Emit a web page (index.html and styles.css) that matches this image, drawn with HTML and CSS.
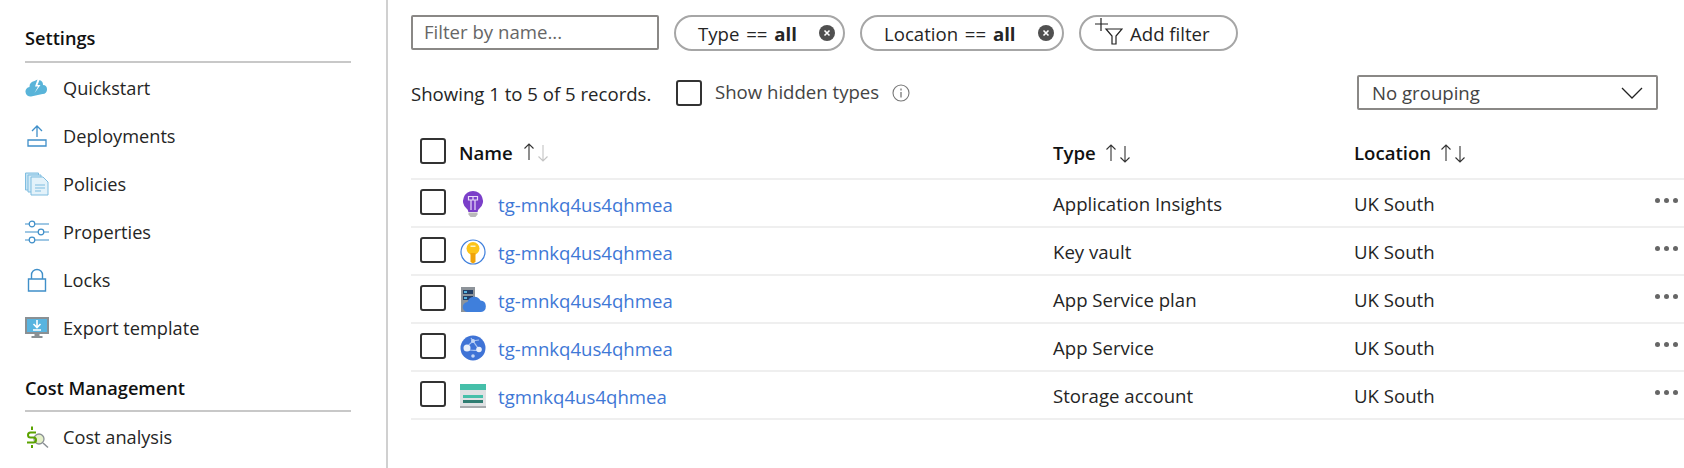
FILE: index.html
```html
<!DOCTYPE html>
<html lang="en">
<head>
    <meta charset="UTF-8">
    <title>Resources</title>
    <link rel="stylesheet" href="styles.css">
</head>
<body>
    <div class="page">

        <div class="sidebar">
            <div class="section-title first">Settings</div>
            <a class="nav-item">
                <svg class="nav-icon" viewBox="0 0 24 24"><path fill="#59b4d9" d="M6 20.500a5 5 0 0 1-5.500-4.500 4.500 4.500 0 0 1 4-5 6 6 0 0 1 5-6l3-1.500-2.500 7h3l-3.500 6.500 6-8h-3l2-5a5 5 0 0 1 3.500 5 4.300 4.300 0 0 1 4 4.500 4.200 4.200 0 0 1-4.500 4.500z"/></svg>
                Quickstart
            </a>
            <a class="nav-item">
                <svg class="nav-icon" viewBox="0 0 24 24"><path fill="none" stroke="#3f8fc9" stroke-width="1.300" d="M3 16h18v6H3zM12 13V2M7 7l5-5 5 5"/></svg>
                Deployments
            </a>
            <a class="nav-item">
                <svg class="nav-icon" viewBox="0 0 24 24"><path fill="#c5e3f3" stroke="#7fbde0" d="M.5 1h13v17H.5z"/><path fill="#d5ebf7" stroke="#7fbde0" d="M3 3h13v17H3z"/><path fill="#e3f2fa" stroke="#7fbde0" d="M6 5h12l5 5v13H6z"/><path stroke="#7fbde0" d="M10 13h10M10 16h10M10 19h6"/></svg>
                Policies
            </a>
            <a class="nav-item">
                <svg class="nav-icon" viewBox="0 0 24 24"><g fill="#fff" stroke="#3f8fc9" stroke-width="1.200"><path d="M0 4h24M0 12h24M0 20h24"/><circle cx="7" cy="4" r="2.800"/><circle cx="16" cy="12" r="2.800"/><circle cx="7" cy="20" r="2.800"/></g></svg>
                Properties
            </a>
            <a class="nav-item">
                <svg class="nav-icon" viewBox="0 0 24 24"><path fill="none" stroke="#3f8fc9" stroke-width="1.400" d="M3.500 11h17v12h-17zM6.500 11V7a5.500 5.500 0 0 1 11 0v4"/></svg>
                Locks
            </a>
            <a class="nav-item">
                <svg class="nav-icon" viewBox="0 0 24 24"><path fill="#8a9094" d="M0 1h24v17H0zM9.500 18h5v2h3v2h-11v-2h3z"/><path fill="#59b4e0" d="M2 3h20v13H2z"/><path fill="none" stroke="#fff" stroke-width="1.600" d="M12 4v7M8.500 8l3.500 3.500L15.500 8M8 14h8"/></svg>
                Export template
            </a>

            <div class="section-title">Cost Management</div>
            <a class="nav-item">
                <svg class="nav-icon" viewBox="0 0 24 24"><circle cx="14" cy="14" r="5" fill="#e4f0c8" stroke="#8a9094" stroke-width="1.300"/><path stroke="#8a9094" stroke-width="1.500" d="M18 18l5 4.500"/><path fill="none" stroke="#5ba300" stroke-width="2" d="M11 7.500H5.500a2.500 2.500 0 0 0 0 5h3a2.500 2.500 0 0 1 0 5H2M7 1.500V5M7 20v3"/></svg>
                Cost analysis
            </a>
        </div>

        <div class="main">

            <div class="toolbar">
                <div class="filter-input">Filter by name...</div>
                <div class="pill pill-type">
                    <span class="pill-text">Type == <b>all</b></span>
                    <span class="pill-x">
                        <svg viewBox="0 0 16 16"><circle cx="8" cy="8" r="8" fill="#505050"/><path stroke="#fff" stroke-width="1.600" d="M5.500 5.500l5 5M10.500 5.500l-5 5"/></svg>
                    </span>
                </div>
                <div class="pill pill-location">
                    <span class="pill-text">Location == <b>all</b></span>
                    <span class="pill-x">
                        <svg viewBox="0 0 16 16"><circle cx="8" cy="8" r="8" fill="#505050"/><path stroke="#fff" stroke-width="1.600" d="M5.500 5.500l5 5M10.500 5.500l-5 5"/></svg>
                    </span>
                </div>
                <div class="pill pill-add">
                    <svg class="add-icon" viewBox="0 0 28 28"><path fill="none" stroke="#222" stroke-width="1.200" d="M6 1v13M0 7h13M11 12h16l-6 7v8h-4v-8z"/></svg>
                    <span>Add filter</span>
                </div>
            </div>

            <div class="summary">
                <span class="records">Showing 1 to 5 of 5 records.</span>
                <span class="check hidden-check"></span>
                <span class="hidden-label">Show hidden types</span>
                <svg class="info" viewBox="0 0 18 18"><circle cx="9" cy="9" r="8" fill="none" stroke="#777" stroke-width="1.100"/><path stroke="#777" stroke-width="1.300" d="M9 8v5.500M9 4.500v2"/></svg>
                <div class="grouping">
                    <span>No grouping</span>
                    <svg class="chevron" viewBox="0 0 22 12"><path fill="none" stroke="#222" stroke-width="1.300" d="M1 1l10 10L21 1"/></svg>
                </div>
            </div>

            <div class="row head">
                <div class="name-col">
                    <span class="check"></span>
                    <span class="head-label">Name</span>
                    <svg class="sort" viewBox="0 0 28 20"><path fill="none" stroke="#333" stroke-width="1.100" d="M6 18V2M1.500 6.500L6 2l4.500 4.500"/><path fill="none" stroke="#c4c4c4" stroke-width="1.100" d="M20 3v16M15.500 14.500L20 19l4.500-4.500"/></svg>
                </div>
                <div><span class="head-label">Type</span>
                    <svg class="sort" viewBox="0 0 28 20"><path fill="none" stroke="#333" stroke-width="1.100" d="M6 18V2M1.500 6.500L6 2l4.500 4.500M20 3v16M15.500 14.500L20 19l4.500-4.500"/></svg>
                </div>
                <div><span class="head-label">Location</span>
                    <svg class="sort" viewBox="0 0 28 20"><path fill="none" stroke="#333" stroke-width="1.100" d="M6 18V2M1.500 6.500L6 2l4.500 4.500M20 3v16M15.500 14.500L20 19l4.500-4.500"/></svg>
                </div>
            </div>

            <div class="row">
                <div class="name-col">
                    <span class="check"></span>
                    <svg class="res-icon" viewBox="0 0 26 26"><path fill="#7b3fc9" d="M13 0a10 10 0 0 0-6.500 17.500c1.300 1.200 1.800 2 1.800 3.500h9.400c0-1.500.5-2.300 1.800-3.500A10 10 0 0 0 13 0z"/><path fill="#b9b9b9" d="M8.500 21.500h9v2l-2 2.500h-5l-2-2.500z"/><path fill="none" stroke="#e8dcf8" stroke-width="1.200" d="M11 9v10M15 9v10M8.500 5.500H13v3.500H8.500zM13 5.500h4.500v3.500H13z"/></svg>
                    <a class="res-link">tg-mnkq4us4qhmea</a>
                </div>
                <div>Application Insights</div>
                <div>UK South</div>
                <span class="dots"><i></i><i></i><i></i></span>
            </div>
            <div class="row">
                <div class="name-col">
                    <span class="check"></span>
                    <svg class="res-icon" viewBox="0 0 26 26"><circle cx="13" cy="13" r="12" fill="#fff" stroke="#3f7fdc" stroke-width="1.200"/><circle cx="13" cy="9.500" r="6.500" fill="#fcc419"/><path fill="#f0a30a" d="M10.500 14h5v9l-2.500 1.500-2.500-1.500z"/><path fill="#fff3c4" d="M10.500 6.500h5V8h-5z"/></svg>
                    <a class="res-link">tg-mnkq4us4qhmea</a>
                </div>
                <div>Key vault</div>
                <div>UK South</div>
                <span class="dots"><i></i><i></i><i></i></span>
            </div>
            <div class="row">
                <div class="name-col">
                    <span class="check"></span>
                    <svg class="res-icon" viewBox="0 0 26 26"><path fill="#8e949a" d="M1 0h14v25H1z"/><path fill="#233f66" d="M3 3h10v4H3zM3 9h10v4H3z"/><path fill="#59b4e0" d="M4 4h3v2H4zM4 10h3v2H4z"/><path fill="#3f7fdc" d="M8 25a5 5 0 0 1-.5-10 7 7 0 0 1 13-1.500 5.800 5.800 0 0 1 .5 11.500z"/></svg>
                    <a class="res-link">tg-mnkq4us4qhmea</a>
                </div>
                <div>App Service plan</div>
                <div>UK South</div>
                <span class="dots"><i></i><i></i><i></i></span>
            </div>
            <div class="row">
                <div class="name-col">
                    <span class="check"></span>
                    <svg class="res-icon" viewBox="0 0 26 26"><circle cx="13" cy="13" r="12.500" fill="#3f73d6"/><path fill="none" stroke="#a9c4f2" stroke-width="1.200" d="M7 13C10 7 15 5 19 5M8 15c4 0 8 1 11 0M11 3c3 5 6 8 8 12"/><circle cx="7" cy="13" r="3.500" fill="#e8eefa"/><circle cx="19" cy="14.500" r="2.800" fill="#e8eefa"/><circle cx="13" cy="6" r="2" fill="#c4d6f5"/><circle cx="13" cy="21" r="1.800" fill="#c4d6f5"/></svg>
                    <a class="res-link">tg-mnkq4us4qhmea</a>
                </div>
                <div>App Service</div>
                <div>UK South</div>
                <span class="dots"><i></i><i></i><i></i></span>
            </div>
            <div class="row">
                <div class="name-col">
                    <span class="check"></span>
                    <svg class="res-icon" viewBox="0 0 26 26"><path fill="#dfe1e3" d="M0 1h26v24H0z"/><path fill="#45bfa9" d="M0 1h26v6H0z"/><path fill="#45bfa9" d="M3 12h20v3H3z"/><path fill="#2f7d72" d="M3 17h20v3H3z"/><path fill="#a8abae" d="M0 23h26v2H0z"/></svg>
                    <a class="res-link">tgmnkq4us4qhmea</a>
                </div>
                <div>Storage account</div>
                <div>UK South</div>
                <span class="dots"><i></i><i></i><i></i></span>
            </div>

        </div>
    </div>
</body>
</html>
```

FILE: styles.css
```css
body {
    margin: 0;
    height: 468px;
    overflow: hidden;
    background-color: #fff;
    color: #252525;
    font-family: "Open Sans", "Noto Sans", Arial, sans-serif;
    font-size: 18.6px;
}

.page {
    display: flex;
    height: 468px;
}

/* Left menu */
.sidebar {
    width: 388px;
    flex: none;
    box-sizing: border-box;
    padding-left: 25px;
    border-right: 2px solid #d0d0d0;
    font-size: 18.2px;
}

.section-title {
    width: 326px;
    height: 36px;
    margin-top: 22px;
    border-bottom: 2px solid #c8c8c8;
    color: #111;
    font-weight: 600;
    line-height: 28px;
}

.section-title.first {
    margin-top: 23px;
    height: 38px;
    line-height: 30px;
}

.nav-item {
    display: flex;
    align-items: center;
    gap: 14px;
    height: 48px;
}

.section-title + .nav-item {
    margin-top: 1px;
}

.nav-icon {
    width: 24px;
    height: 24px;
    flex: none;
}

/* Right side */
.main {
    flex: 1;
    padding-left: 23px;
    min-width: 0;
}

.toolbar {
    display: flex;
    gap: 15px;
    margin-top: 15px;
    height: 36px;
}

.filter-input {
    width: 248px;
    height: 35px;
    box-sizing: border-box;
    padding-left: 11px;
    border: 2px solid #8a8886;
    border-radius: 2px;
    color: #666;
    line-height: 30px;
}

.pill {
    display: flex;
    align-items: center;
    height: 36px;
    box-sizing: border-box;
    border: 2px solid #a6a6a6;
    border-radius: 18px;
}

.pill-text {
    word-spacing: 2px;
}

.pill-type {
    width: 171px;
    padding-left: 22px;
}

.pill-location {
    width: 204px;
    padding-left: 22px;
}

.pill-add {
    width: 159px;
    padding-left: 14px;
}

.pill-x {
    margin-left: auto;
    margin-right: 8px;
    height: 16px;
}

.pill-x svg {
    display: block;
    width: 16px;
    height: 16px;
}

.add-icon {
    width: 28px;
    height: 28px;
    margin-right: 7px;
    margin-top: -4px;
}

.summary {
    display: flex;
    align-items: center;
    height: 35px;
    margin-top: 24px;
    padding-right: 26px;
}

.records {
    width: 265px;
    margin-top: 2px;
}

.check {
    display: inline-block;
    flex: none;
    width: 26px;
    height: 26px;
    box-sizing: border-box;
    border: 2px solid #333;
    border-radius: 3px;
}

.hidden-label {
    margin-left: 13px;
    margin-top: -3px;
    color: #444;
}

.info {
    width: 18px;
    height: 18px;
    margin-left: 13px;
}

.grouping {
    display: flex;
    align-items: center;
    justify-content: space-between;
    width: 301px;
    height: 35px;
    box-sizing: border-box;
    margin-left: auto;
    padding: 0 13px;
    border: 2px solid #8a8886;
    border-radius: 2px;
    color: #444;
}

.chevron {
    width: 22px;
    height: 12px;
}

/* Table */
.row {
    display: grid;
    grid-template-columns: 642px 301px 1fr;
    align-items: center;
    position: relative;
    height: 48px;
    box-sizing: border-box;
    border-bottom: 2px solid #efefef;
}

.row.head {
    margin-top: 20px;
    height: 50px;
    padding-bottom: 4px;
}

.name-col {
    display: flex;
    align-items: center;
    padding-left: 9px;
}

.head-label {
    color: #111;
    font-weight: 600;
}

.name-col .head-label {
    margin-left: 13px;
}

.sort {
    width: 28px;
    height: 20px;
    margin-left: 4px;
    vertical-align: -3px;
}

.name-col .sort {
    margin-left: 10px;
}

.row .check {
    margin-top: -3px;
}

.res-icon {
    width: 26px;
    height: 26px;
    flex: none;
    margin-left: 14px;
    margin-top: 1px;
}

.res-link {
    margin-left: 12px;
    margin-top: 2px;
    color: #3f78d6;
}

.dots {
    position: absolute;
    right: 6px;
    top: 18px;
    display: flex;
    gap: 4px;
}

.dots i {
    width: 5px;
    height: 5px;
    border-radius: 50%;
    background-color: #666;
}
```
